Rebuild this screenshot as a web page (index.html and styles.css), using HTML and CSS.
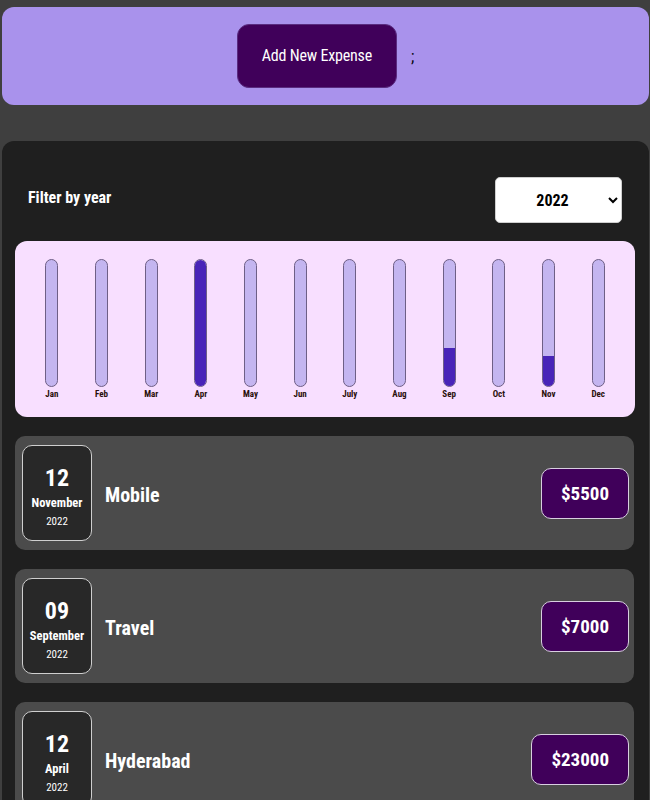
FILE: index.html
```html
<!DOCTYPE html>
<html>
<head>
<meta charset="utf-8">
<link rel="stylesheet" href="styles.css">
</head>
<body>
<div class="page">
  <div class="new-expense">
    <button class="add-btn">Add New Expense</button>
    <span class="semi">;</span>
  </div>

  <div class="expenses">
    <div class="filter">
      <label class="filter-label">Filter by year</label>
      <select class="year-select">
        <option>2022</option>
        <option>2021</option>
        <option>2020</option>
      </select>
    </div>

    <div class="chart">
      <div class="bar-col"><div class="bar"><div class="fill" style="height:0%"></div></div><span class="bar-label">Jan</span></div>
      <div class="bar-col"><div class="bar"><div class="fill" style="height:0%"></div></div><span class="bar-label">Feb</span></div>
      <div class="bar-col"><div class="bar"><div class="fill" style="height:0%"></div></div><span class="bar-label">Mar</span></div>
      <div class="bar-col"><div class="bar"><div class="fill" style="height:100%"></div></div><span class="bar-label">Apr</span></div>
      <div class="bar-col"><div class="bar"><div class="fill" style="height:0%"></div></div><span class="bar-label">May</span></div>
      <div class="bar-col"><div class="bar"><div class="fill" style="height:0%"></div></div><span class="bar-label">Jun</span></div>
      <div class="bar-col"><div class="bar"><div class="fill" style="height:0%"></div></div><span class="bar-label">July</span></div>
      <div class="bar-col"><div class="bar"><div class="fill" style="height:0%"></div></div><span class="bar-label">Aug</span></div>
      <div class="bar-col"><div class="bar"><div class="fill" style="height:30.4%"></div></div><span class="bar-label">Sep</span></div>
      <div class="bar-col"><div class="bar"><div class="fill" style="height:0%"></div></div><span class="bar-label">Oct</span></div>
      <div class="bar-col"><div class="bar"><div class="fill" style="height:23.9%"></div></div><span class="bar-label">Nov</span></div>
      <div class="bar-col"><div class="bar"><div class="fill" style="height:0%"></div></div><span class="bar-label">Dec</span></div>
    </div>

    <ul class="list">
      <li class="item">
        <div class="date">
          <div class="date-day">12</div>
          <div class="date-month">November</div>
          <div class="date-year">2022</div>
        </div>
        <h2 class="title">Mobile</h2>
        <div class="price">$5500</div>
      </li>
      <li class="item">
        <div class="date">
          <div class="date-day">09</div>
          <div class="date-month">September</div>
          <div class="date-year">2022</div>
        </div>
        <h2 class="title">Travel</h2>
        <div class="price">$7000</div>
      </li>
      <li class="item">
        <div class="date">
          <div class="date-day">12</div>
          <div class="date-month">April</div>
          <div class="date-year">2022</div>
        </div>
        <h2 class="title">Hyderabad</h2>
        <div class="price">$23000</div>
      </li>
    </ul>
  </div>
</div>
</body>
</html>
```

FILE: styles.css
```css
* { box-sizing: border-box; }

html, body {
  margin: 0;
  background: #3f3f3f;
  font-family: "Roboto Condensed", "Liberation Sans Narrow", Roboto, sans-serif;
  font-stretch: condensed;
}

.page {
  padding: 7px 1px 0 2px;
}

.new-expense {
  height: 98px;
  background: #a992ec;
  border-radius: 12px;
  display: flex;
  align-items: center;
  justify-content: center;
  gap: 14px;
}

.add-btn {
  width: 160px;
  height: 64px;
  margin-top: -1px;
  background: #40005a;
  border: 1px solid #5a2c80;
  border-radius: 12px;
  color: #ffffff;
  font-family: inherit;
  font-stretch: condensed;
  font-size: 16px;
  letter-spacing: -0.2px;
  cursor: pointer;
}

.semi {
  font-size: 16px;
  color: #000;
}

.expenses {
  margin-top: 36px;
  background: #1f1f1f;
  border-radius: 12px;
  padding: 0 14px 40px 13px;
  min-height: 700px;
}

.filter {
  display: flex;
  align-items: center;
  justify-content: space-between;
  padding: 36px 13px 0 13px;
  margin-bottom: 18px;
}

.filter-label {
  color: #ffffff;
  font-weight: bold;
  font-size: 16px;
  margin-top: -6px;
}

.year-select {
  width: 127px;
  height: 46px;
  border: 1px solid #cfcfcf;
  border-radius: 5px;
  background: #ffffff;
  font-family: inherit;
  font-stretch: condensed;
  font-weight: bold;
  font-size: 16px;
  color: #000;
  text-align: center;
  text-align-last: center;
  padding: 0 4px;
}

.chart {
  height: 176px;
  background: #f8dfff;
  border-radius: 12px;
  padding: 18px 12px 0 12px;
  display: grid;
  grid-template-columns: repeat(12, 1fr);
  align-items: start;
}

.bar-col {
  display: flex;
  flex-direction: column;
  align-items: center;
}

.bar {
  width: 13px;
  height: 128px;
  border: 1px solid #6e5f86;
  border-radius: 7px;
  background: #c4b5f0;
  overflow: hidden;
  display: flex;
  flex-direction: column;
  justify-content: flex-end;
}

.fill {
  background: #4824b8;
  width: 100%;
}

.bar-label {
  margin-top: 2px;
  font-size: 9px;
  font-weight: bold;
  color: #2a0f0a;
}

.list {
  list-style: none;
  margin: 19px 1px 0 0;
  padding: 0;
  display: flex;
  flex-direction: column;
  gap: 19px;
}

.item {
  height: 114px;
  background: #4b4b4b;
  border-radius: 10px;
  display: flex;
  align-items: center;
  padding: 0 5px 0 7px;
}

.date {
  width: 70px;
  height: 96px;
  padding-top: 8px;
  background: #282828;
  border: 1px solid #cfcfcf;
  border-radius: 10px;
  color: #ffffff;
  display: flex;
  flex-direction: column;
  align-items: center;
  justify-content: center;
  font-weight: bold;
}

.date-day {
  font-size: 24px;
  line-height: 28px;
}

.date-month {
  font-size: 12.5px;
  line-height: 21px;
}

.date-year {
  font-size: 11px;
  font-weight: normal;
  line-height: 18px;
}

.title {
  flex: 1;
  margin: 3px 0 0 13px;
  color: #ffffff;
  font-size: 20px;
  font-weight: bold;
}

.price {
  height: 51px;
  padding: 0 19px;
  display: flex;
  align-items: center;
  background: #40005a;
  border: 1px solid #d8cfe0;
  border-radius: 10px;
  color: #ffffff;
  font-weight: bold;
  font-size: 19px;
}
```
